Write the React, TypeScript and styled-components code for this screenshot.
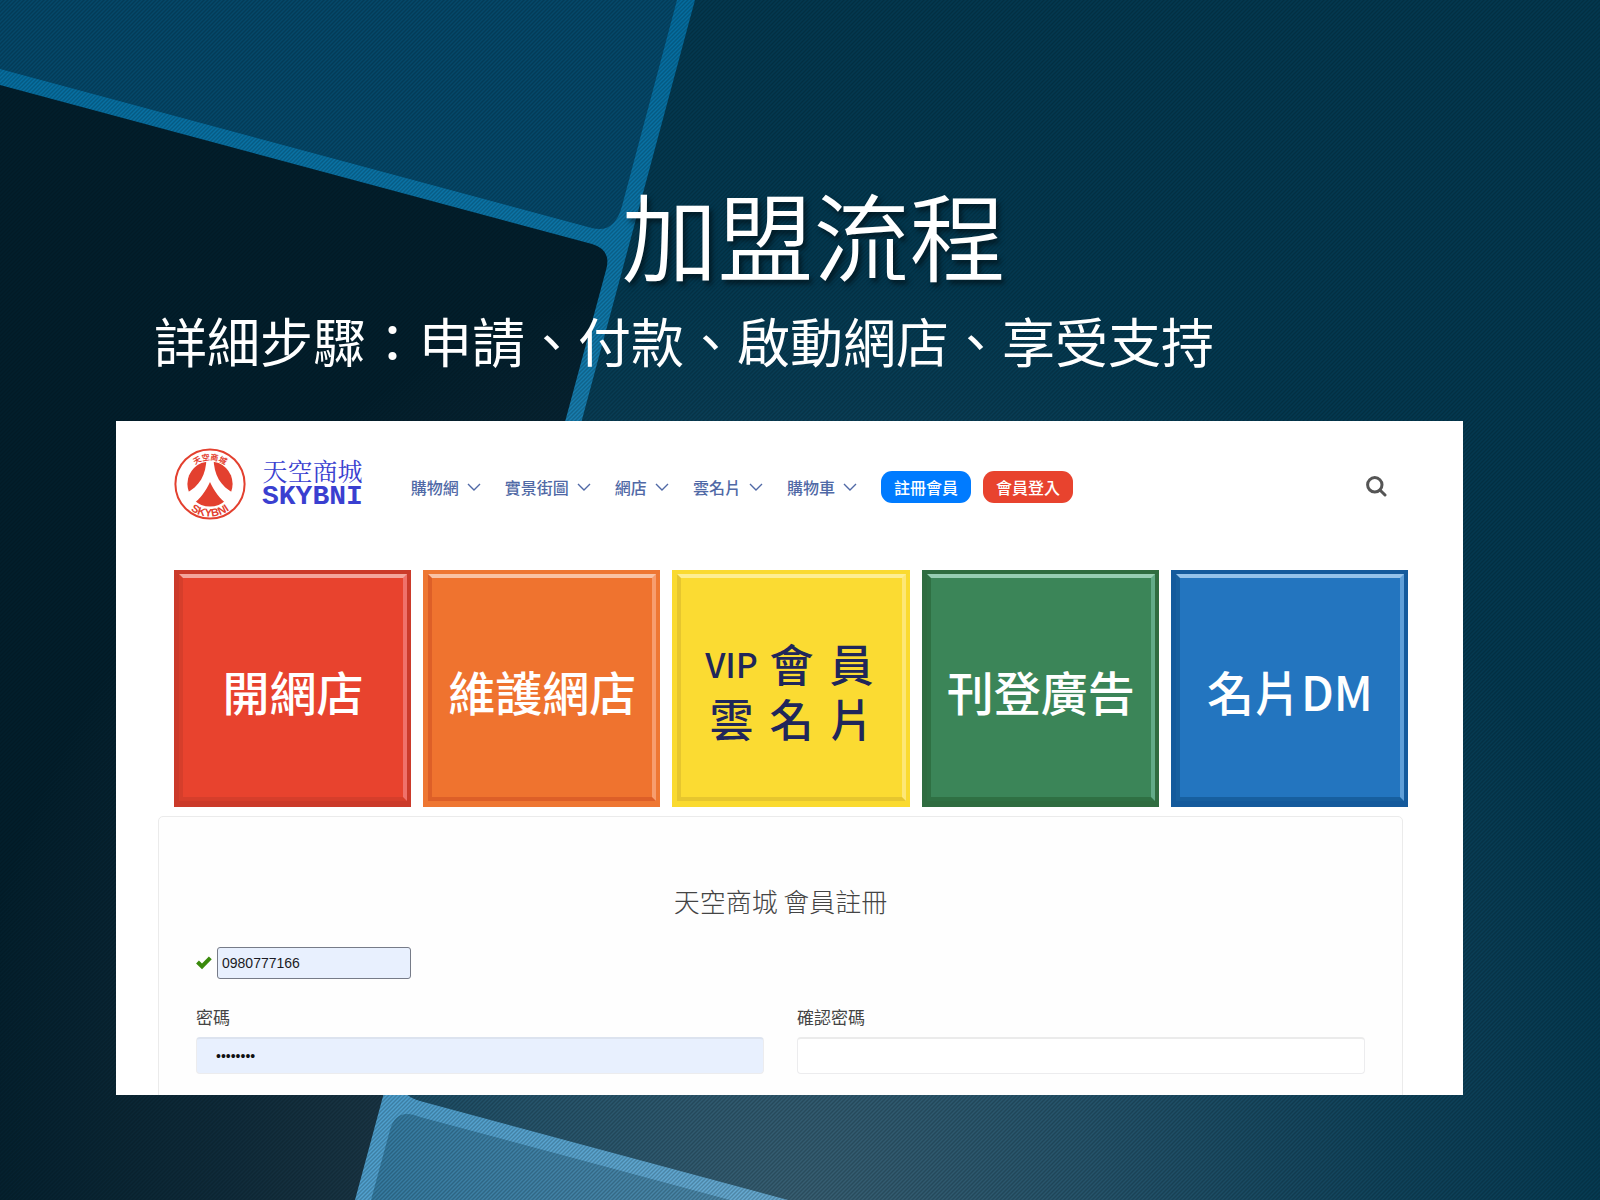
import React from "react";
import styled, { createGlobalStyle } from "styled-components";

const sans = `"Noto Sans CJK TC", "Noto Sans", sans-serif`;

const GlobalStyle = createGlobalStyle`
  *, *::before, *::after { box-sizing: border-box; }
  body {
    margin: 0;
    background: #03324a;
    font-family: ${sans};
  }
`;

const Slide = styled.main`
  position: relative;
  isolation: isolate;
  overflow: hidden;
  min-height: 100vh;
  padding: 179px 137px 105px 116px;
  display: flex;
  flex-direction: column;
`;

const Backdrop = styled.svg`
  position: absolute;
  inset: 0;
  z-index: -1;
  width: 100%;
  height: 100%;
`;

const Title = styled.h1`
  margin: 0;
  padding-left: 48px;
  font-size: 96px;
  line-height: 108px;
  font-weight: 350;
  text-align: center;
  color: #fff;
  text-shadow: 3px 4px 5px rgba(0, 0, 0, 0.5);
`;

const Subtitle = styled.p`
  margin: 13px 0 0 38px;
  font-size: 53px;
  line-height: 80px;
  font-weight: 400;
  color: #fff;
`;

const Site = styled.section`
  margin-top: 41px;
  height: 674px;
  flex: none;
  overflow: hidden;
  background: #fff;
  display: flex;
  flex-direction: column;
`;

const Header = styled.header`
  display: flex;
  align-items: center;
  padding: 27px 76px 0 58px;
`;

const Brand = styled.a`
  display: flex;
  align-items: center;
  gap: 16px;
  text-decoration: none;
`;

const Wordmark = styled.span`
  display: flex;
  flex-direction: column;
  align-items: center;
  color: #3a3fd0;
`;

const WordmarkName = styled.span`
  font-family: "AR PL UKai TW", "Noto Serif CJK TC", ${sans};
  font-size: 25px;
  line-height: 25px;
`;

const WordmarkLatin = styled.span`
  font-family: "Liberation Mono", monospace;
  font-weight: 700;
  font-size: 28px;
  line-height: 28px;
`;

const Nav = styled.nav`
  flex: 1;
  display: flex;
  align-items: center;
  gap: 24px;
  margin-left: 48px;
  padding-top: 6px;
`;

const NavLink = styled.a`
  display: flex;
  align-items: center;
  gap: 8px;
  font-size: 16px;
  line-height: 24px;
  font-weight: 500;
  color: #5069a6;
  text-decoration: none;
`;

const Actions = styled.div`
  display: flex;
  gap: 12px;
`;

const Pill = styled.button<{ $color: string }>`
  height: 32px;
  padding: 0 13px;
  border: 0;
  border-radius: 11px;
  background: ${(p) => p.$color};
  color: #fff;
  font: 500 16px/32px ${sans};
`;

const IconButton = styled.button`
  display: flex;
  padding: 5px 0 0;
  border: 0;
  background: none;
  color: #555;
`;

const Tiles = styled.div`
  display: grid;
  grid-template-columns: repeat(5, 1fr);
  gap: 12px;
  padding: 50px 55px 0 58px;
`;

type TileColors = {
  face: string;
  edge: string;
  light: string;
  side: string;
  dark: string;
  ink?: string;
};

const Tile = styled.a<{ $c: TileColors }>`
  aspect-ratio: 1;
  display: flex;
  padding: 4px 4px 6px 5px;
  background: ${(p) => p.$c.edge};
  color: ${(p) => p.$c.ink ?? "#fff"};
  font-size: 47px;
  line-height: 56px;
  font-weight: 500;
  text-decoration: none;
`;

const TileFace = styled.span<{ $c: TileColors }>`
  flex: 1;
  display: flex;
  align-items: center;
  justify-content: center;
  padding-top: 6px;
  border: 4px solid;
  border-color: ${(p) => `${p.$c.light} ${p.$c.side} ${p.$c.dark} ${p.$c.dark}`};
  background: ${(p) => p.$c.face};
`;

const VipGrid = styled.span`
  display: grid;
  grid-template-columns: repeat(3, 60px);
  justify-items: center;
  align-items: center;
  font-size: 44px;
  line-height: 55px;
`;

const VipLatin = styled.span`
  font-size: 34px;
`;

const Card = styled.form`
  flex: 1 0 320px;
  margin: 9px 60px 0 42px;
  padding: 65px 37px 0;
  border: 1px solid #ebebeb;
  border-radius: 5px;
  background: #fefefe;
`;

const CardTitle = styled.h2`
  margin: 0;
  font-size: 26px;
  line-height: 38px;
  font-weight: 300;
  text-align: center;
  color: #444;
`;

const AccountRow = styled.div`
  display: flex;
  align-items: center;
  gap: 5px;
  margin-top: 27px;
  color: #3a8a0c;
`;

const AccountInput = styled.input`
  width: 194px;
  height: 32px;
  padding: 0 4px;
  border: 1px solid #767b88;
  border-radius: 3px;
  background: #e8f0fe;
  color: #1b1b24;
  font: 14px "Liberation Sans", Arial, sans-serif;
`;

const Fields = styled.div`
  display: grid;
  grid-template-columns: 1fr 1fr;
  gap: 33px;
  margin-top: 25px;
`;

const Field = styled.label`
  display: flex;
  flex-direction: column;
  gap: 7px;
  font-size: 17px;
  line-height: 26px;
  color: #444;
`;

const PasswordInput = styled.input<{ $filled?: boolean }>`
  width: 100%;
  height: 37px;
  padding: 0 19px;
  border: 1px solid #ececee;
  border-top: 2px solid ${(p) => (p.$filled ? "#dce3ef" : "#ebebeb")};
  border-radius: 4px;
  background: ${(p) => (p.$filled ? "#e8f0fe" : "#fff")};
  color: #111;
  font: 14px "Liberation Sans", Arial, sans-serif;
`;

const navItems = ["購物網", "實景街圖", "網店", "雲名片", "購物車"];

const tiles: { label: string; colors: TileColors }[] = [
  { label: "開網店", colors: { face: "#e8432e", edge: "#cb3a2a", light: "#f4a59c", side: "#f0716a", dark: "#d63e2b" } },
  { label: "維護網店", colors: { face: "#ef732f", edge: "#ee7733", light: "#f9c3a5", side: "#f79d6e", dark: "#dd5f28" } },
  { label: "VIP會員雲名片", colors: { face: "#fbdb32", edge: "#fada30", light: "#fdee92", side: "#fde776", dark: "#e6c62e", ink: "#20265a" } },
  { label: "刊登廣告", colors: { face: "#3b8558", edge: "#2f6c40", light: "#97cdb3", side: "#62ab88", dark: "#2f7043" } },
  { label: "名片DM", colors: { face: "#2375bf", edge: "#145a9c", light: "#94c2ea", side: "#5f9fd8", dark: "#175f9f" } },
];

const Chevron = () => (
  <svg width="14" height="8" viewBox="0 0 14 8" fill="none" stroke="currentColor" strokeWidth="1.4" aria-hidden="true">
    <path d="M1 1 L7 7 L13 1" />
  </svg>
);

const SearchIcon = () => (
  <svg width="21" height="21" viewBox="0 0 21 21" fill="none" stroke="currentColor" strokeWidth="3" strokeLinecap="round" aria-hidden="true">
    <circle cx="8.8" cy="8.8" r="7.2" />
    <path d="M14.2 14.2 L19 19" />
  </svg>
);

const CheckIcon = () => (
  <svg width="16" height="16" viewBox="0 0 16 16" fill="none" stroke="currentColor" strokeWidth="4" aria-hidden="true">
    <path d="M1.5 7 L6 11.500 L14.3 2.8" />
  </svg>
);

const Logo = () => (
  <svg width="72" height="72" viewBox="0 0 72 72" aria-hidden="true">
    <defs>
      <path id="logo-top" d="M12 36 A24 24 0 0 1 60 36" />
      <path id="logo-bottom" d="M3.5 36 A32.5 32.5 0 0 0 68.5 36" />
    </defs>
    <circle cx="36" cy="36" r="34.6" fill="#fff" stroke="#e3402f" strokeWidth="2" />
    <circle cx="36" cy="36" r="22.6" fill="#e3402f" />
    <path
      d="M32.5 10 H39.5 C40 27 46 38 61 46 L53 56 C46 51 40 43 36 34 C32 43 26 51 19 56 L11 46 C26 38 32 27 32.5 10 Z"
      fill="#fff"
    />
    <text fill="#e3402f" fontSize="8" fontWeight="700" fontFamily="Noto Sans CJK TC, sans-serif" textAnchor="middle">
      <textPath href="#logo-top" startOffset="50%">天空商城</textPath>
    </text>
    <text fill="#e3402f" fontSize="11" fontWeight="700" fontFamily="Liberation Sans, sans-serif" textAnchor="middle">
      <textPath href="#logo-bottom" startOffset="50%">SKYBNI</textPath>
    </text>
  </svg>
);

const SlideBackdrop = () => (
  <Backdrop viewBox="0 0 1600 1200" preserveAspectRatio="xMidYMid slice" aria-hidden="true">
    <defs>
      <linearGradient id="band" x1="0" y1="0" x2="0" y2="1">
        <stop offset="0" stopColor="#046c9f" />
        <stop offset="0.3" stopColor="#1078aa" />
        <stop offset="1" stopColor="#429acb" />
      </linearGradient>
      <radialGradient id="glow" gradientUnits="userSpaceOnUse" cx="0" cy="0" r="1" gradientTransform="translate(800 1240) scale(860 980)">
        <stop offset="0" stopColor="#e8dce0" stopOpacity="0.24" />
        <stop offset="0.35" stopColor="#ccd8ee" stopOpacity="0.17" />
        <stop offset="0.7" stopColor="#b0c8e8" stopOpacity="0.07" />
        <stop offset="1" stopColor="#b0c8e8" stopOpacity="0" />
      </radialGradient>
      <pattern id="hatch" width="4" height="4" patternUnits="userSpaceOnUse">
        <path d="M-1 1 L1 -1 M0 4 L4 0 M3 5 L5 3" stroke="#000c14" strokeOpacity="0.22" strokeWidth="1.4" />
      </pattern>
    </defs>
    <rect width="1600" height="1200" fill="url(#band)" />
    <path d="M0 0 H677 L622 206 Q614 236 588 227 L0 69 Z" fill="#05486a" />
    <path d="M0 85 L592 244 Q612 250 606 270 L355 1200 H0 Z" fill="#021e2c" />
    <path d="M695 0 H1600 V1200 H788 L420 1101 Q398 1095 405 1077 Z" fill="#033850" />
    <path d="M371 1200 L390 1130 Q396 1107 420 1117 L730 1200 Z" fill="#216e96" />
    <rect width="1600" height="1200" fill="url(#glow)" />
    <rect width="1600" height="1200" fill="url(#hatch)" />
  </Backdrop>
);

export default function App() {
  return (
    <Slide lang="zh-TW">
      <GlobalStyle />
      <SlideBackdrop />
      <Title>加盟流程</Title>
      <Subtitle>詳細步驟：申請、付款、啟動網店、享受支持</Subtitle>
      <Site>
        <Header>
          <Brand href="#">
            <Logo />
            <Wordmark>
              <WordmarkName>天空商城</WordmarkName>
              <WordmarkLatin>SKYBNI</WordmarkLatin>
            </Wordmark>
          </Brand>
          <Nav>
            {navItems.map((item) => (
              <NavLink href="#" key={item}>
                {item}
                <Chevron />
              </NavLink>
            ))}
            <Actions>
              <Pill type="button" $color="#007bff">註冊會員</Pill>
              <Pill type="button" $color="#e8432e">會員登入</Pill>
            </Actions>
          </Nav>
          <IconButton type="button" aria-label="搜尋">
            <SearchIcon />
          </IconButton>
        </Header>
        <Tiles>
          {tiles.map(({ label, colors }) => (
            <Tile href="#" key={label} $c={colors}>
              <TileFace $c={colors}>
                {label.startsWith("VIP") ? (
                  <VipGrid>
                    <VipLatin>VIP</VipLatin>
                    <span>會</span>
                    <span>員</span>
                    <span>雲</span>
                    <span>名</span>
                    <span>片</span>
                  </VipGrid>
                ) : (
                  label
                )}
              </TileFace>
            </Tile>
          ))}
        </Tiles>
        <Card>
          <CardTitle>天空商城 會員註冊</CardTitle>
          <AccountRow>
            <CheckIcon />
            <AccountInput aria-label="手機號碼" defaultValue="0980777166" />
          </AccountRow>
          <Fields>
            <Field>
              密碼
              <PasswordInput type="password" defaultValue="12345678" $filled />
            </Field>
            <Field>
              確認密碼
              <PasswordInput type="password" />
            </Field>
          </Fields>
        </Card>
      </Site>
    </Slide>
  );
}
